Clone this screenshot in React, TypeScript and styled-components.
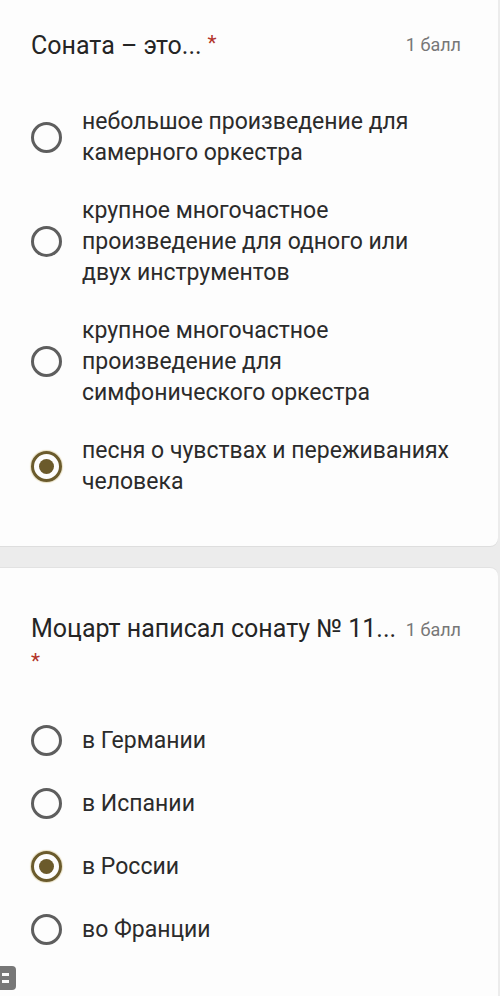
import React, { FC } from 'react';
import styled, { createGlobalStyle } from 'styled-components';

const GlobalStyle = createGlobalStyle`
  html, body {
    margin: 0;
    padding: 0;
    background: #ececec;
  }
  body {
    font-family: Roboto, "Noto Sans", "Liberation Sans", sans-serif;
    -webkit-font-smoothing: antialiased;
  }
`;

const Page = styled.div`
  width: 500px;
  height: 996px;
  overflow: hidden;
  position: relative;
  display: flex;
  flex-direction: column;
  gap: 22px;
  background: #ececec;
`;

const Card = styled.section<{ $top: number; $bottom: number; $round: 'top' | 'bottom' }>`
  margin-left: -10px;
  width: 508px;
  background: #fdfdfd;
  padding: ${p => p.$top}px 0 ${p => p.$bottom}px 41px;
  box-sizing: border-box;
  border-radius: ${p => (p.$round === 'bottom' ? '0 0 8px 0' : '0 8px 0 0')};
  box-shadow: 0 1px 0 #dedede, 0 -1px 0 #e2e2e2;
  flex-shrink: 0;
  flex-grow: ${p => (p.$round === 'top' ? 1 : 0)};
`;

const Header = styled.div`
  display: flex;
  align-items: flex-start;
  justify-content: space-between;
  gap: 8px;
  padding-right: 37px;
`;

const Title = styled.div`
  font-size: 25px;
  line-height: 33px;
  color: #252525;
  white-space: nowrap;
`;

const Star = styled.span<{ $below?: boolean }>`
  color: #b3342a;
  font-size: 21px;
  display: ${p => (p.$below ? 'block' : 'inline')};
  margin-left: ${p => (p.$below ? '0' : '6px')};
  vertical-align: ${p => (p.$below ? 'baseline' : '4px')};
`;

const Points = styled.div`
  flex-shrink: 0;
  font-size: 18px;
  line-height: 33px;
  color: #777;
  margin-top: 1px;
`;

const Options = styled.div<{ $gap: number; $mt: number }>`
  display: flex;
  flex-direction: column;
  gap: ${p => p.$gap}px;
  margin-top: ${p => p.$mt}px;
`;

const Row = styled.label`
  display: flex;
  align-items: center;
  gap: 20px;
`;

const Radio = styled.span<{ $checked?: boolean }>`
  width: 31px;
  height: 31px;
  box-sizing: border-box;
  border-radius: 50%;
  border: 3.5px solid ${p => (p.$checked ? '#6b5b2c' : '#5e5e5e')};
  flex-shrink: 0;
  display: flex;
  align-items: center;
  justify-content: center;
  box-shadow: ${p => (p.$checked ? '0 0 1px 1px #e8dfc0' : 'none')};

  &::after {
    content: '';
    width: 15px;
    height: 15px;
    border-radius: 50%;
    background: #6b5a2b;
    display: ${p => (p.$checked ? 'block' : 'none')};
  }
`;

const OptionText = styled.div`
  font-size: 23px;
  line-height: 31px;
  color: #2b2b2b;
`;

const Badge = styled.div`
  position: absolute;
  left: 0;
  top: 966px;
  width: 16px;
  height: 24px;
  background: #777;
  border-radius: 0 4px 4px 0;
  display: flex;
  flex-direction: column;
  justify-content: center;
  gap: 4px;
  padding-left: 2px;
  box-sizing: border-box;

  span {
    display: block;
    width: 7px;
    height: 3px;
    background: #fafafa;
  }
`;

type Option = { lines: string[]; checked?: boolean };

const q1: Option[] = [
  { lines: ['небольшое произведение для', 'камерного оркестра'] },
  { lines: ['крупное многочастное', 'произведение для одного или', 'двух инструментов'] },
  { lines: ['крупное многочастное', 'произведение для', 'симфонического оркестра'] },
  { lines: ['песня о чувствах и переживаниях', 'человека'], checked: true },
];

const q2: Option[] = [
  { lines: ['в Германии'] },
  { lines: ['в Испании'] },
  { lines: ['в России'], checked: true },
  { lines: ['во Франции'] },
];

const OptionList: FC<{ items: Option[]; gap: number; mt: number }> = ({ items, gap, mt }) => (
  <Options $gap={gap} $mt={mt}>
    {items.map((o, i) => (
      <Row key={i}>
        <Radio $checked={o.checked} />
        <OptionText>
          {o.lines.map((l, j) => (
            <div key={j}>{l}</div>
          ))}
        </OptionText>
      </Row>
    ))}
  </Options>
);

const App: FC = () => {
  return (
    <>
      <GlobalStyle />
      <Page>
        <Card $top={27} $bottom={49} $round="bottom">
          <Header>
            <Title>
              Соната – это...<Star>*</Star>
            </Title>
            <Points>1 балл</Points>
          </Header>
          <OptionList items={q1} gap={27} mt={44} />
        </Card>
        <Card $top={44} $bottom={0} $round="top">
          <Header>
            <Title>
              Моцарт написал сонату № 11...
              <Star $below>*</Star>
            </Title>
            <Points>1 балл</Points>
          </Header>
          <OptionList items={q2} gap={32} mt={47} />
        </Card>
        <Badge>
          <span />
          <span />
        </Badge>
      </Page>
    </>
  );
};

export default App;
